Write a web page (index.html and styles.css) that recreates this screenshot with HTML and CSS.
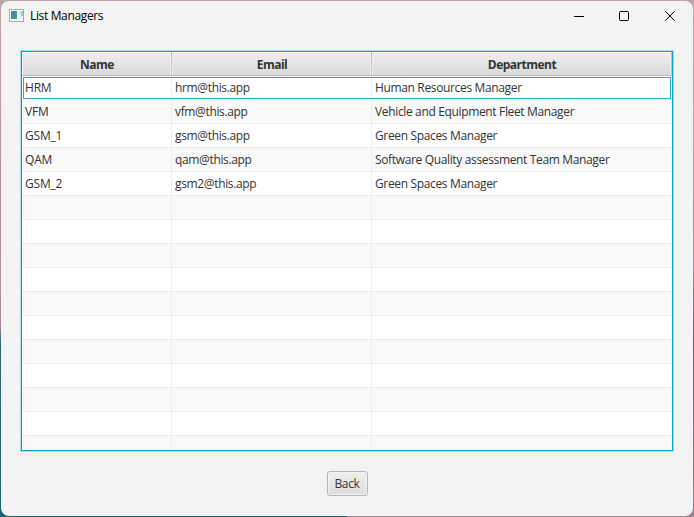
FILE: index.html
```
<!DOCTYPE html>
<html lang="en">
<head>
<meta charset="utf-8">
<title>List Managers</title>
<link rel="stylesheet" href="styles.css">
</head>
<body>
<div class="window">
  <header class="titlebar">
    <svg class="app-icon" width="15" height="13" viewBox="0 0 15 13">
      <defs><linearGradient id="g" x1="0" y1="0" x2="1" y2="1"><stop offset="0" stop-color="#4c7fb0"/><stop offset="1" stop-color="#43a377"/></linearGradient></defs>
      <rect width="15" height="13" fill="#a3a9ad"/>
      <rect x="1" y="1" width="13" height="11" fill="#fafafa"/>
      <rect x="2" y="2" width="6" height="8" fill="url(#g)"/>
      <rect x="9" y="2" width="3" height="4" fill="#e1e6e8"/>
      <rect x="12" y="2" width="2" height="5" fill="#a9c8c4"/>
      <rect x="9" y="7" width="4" height="3" fill="#eceff0"/>
    </svg>
    <h1 class="title">List Managers</h1>
    <div class="controls">
      <svg width="10" height="10" viewBox="0 0 10 10"><path d="M0 5.5H10" stroke="#000"/></svg>
      <svg width="10" height="10" viewBox="0 0 10 10"><rect x=".5" y=".5" width="9" height="9" rx="1" fill="none" stroke="#000"/></svg>
      <svg width="10" height="10" viewBox="0 0 10 10"><path d="M.2.2L9.8 9.8M9.8.2L.2 9.8" stroke="#000"/></svg>
    </div>
  </header>
  <main class="content">
    <div class="table">
      <div class="row head"><div>Name</div><div>Email</div><div>Department</div></div>
      <div class="row focused"><div>HRM</div><div>hrm@this.app</div><div>Human Resources Manager</div></div>
      <div class="row"><div>VFM</div><div>vfm@this.app</div><div>Vehicle and Equipment Fleet Manager</div></div>
      <div class="row"><div>GSM_1</div><div>gsm@this.app</div><div>Green Spaces Manager</div></div>
      <div class="row"><div>QAM</div><div>qam@this.app</div><div>Software Quality assessment Team Manager</div></div>
      <div class="row"><div>GSM_2</div><div>gsm2@this.app</div><div>Green Spaces Manager</div></div>
      <div class="row"><div></div><div></div><div></div></div>
      <div class="row"><div></div><div></div><div></div></div>
      <div class="row"><div></div><div></div><div></div></div>
      <div class="row"><div></div><div></div><div></div></div>
      <div class="row"><div></div><div></div><div></div></div>
      <div class="row"><div></div><div></div><div></div></div>
      <div class="row"><div></div><div></div><div></div></div>
      <div class="row"><div></div><div></div><div></div></div>
      <div class="row"><div></div><div></div><div></div></div>
      <div class="row"><div></div><div></div><div></div></div>
      <div class="row"><div></div><div></div><div></div></div>
    </div>
    <button class="back" type="button">Back</button>
  </main>
</div>
</body>
</html>
```
FILE: styles.css
```
* { box-sizing: border-box; }
body {
  margin: 0;
  padding: 1px;
  height: 517px;
  overflow: hidden;
  font: 12px/16px "Open Sans", "Noto Sans", sans-serif;
  color: #333;
  background:
    linear-gradient(#b9a5ab 0, #a78d99 50%, #6f6079 66%, #9b8490 100%) right / 50% 100% no-repeat,
    linear-gradient(#b9a5ab 0, #a78d99 63%, #35697b 66%, #1f6476 100%) left / 50% 100% no-repeat;
}
.window {
  height: 515px;
  border-radius: 8px;
  overflow: hidden;
  background: #f3f3f3;
}
.titlebar {
  display: flex;
  align-items: center;
  height: 29px;
  padding: 0 18px 0 8px;
}
.app-icon { margin-top: -1px; }
.title {
  margin: 0 0 0 6px;
  font-size: 12px;
  font-weight: 400;
  letter-spacing: -.35px;
  color: #000;
}
.controls { display: flex; gap: 35px; margin-left: auto; }
.controls svg { display: block; }
.controls svg:last-child { margin-left: 1px; }
.content {
  display: flex;
  flex-direction: column;
  align-items: center;
  padding-top: 21px;
}
.table {
  width: 652px;
  height: 400px;
  overflow: hidden;
  border: 1px solid #039ed3;
  box-shadow: 0 0 0 1px #b0dcea;
  background: #fff;
}
.row {
  display: grid;
  grid-template-columns: 150px 200px 300px;
  height: 24px;
  border-bottom: 1px solid #ededed;
  background: #fff;
}
.row:nth-child(odd) { background: #f9f9f9; }
.row > div {
  padding: 4px 3px 0;
  border-right: 1px solid #ededed;
  white-space: nowrap;
  letter-spacing: -.35px;
}
.row > div:first-child { letter-spacing: -.2px; }
.row > div:last-child { border-right: 0; }
.row.focused {
  height: 22px;
  margin: 1px;
  grid-template-columns: 148px 200px 298px;
  border: 1px solid #32a9d2;
}
.row.focused > div { padding-top: 2px; }
.row.focused > div:first-child { padding-left: 1px; }
.row.head {
  height: 24px;
  border-bottom: 1px solid #c0c0c0;
  background: linear-gradient(#efefef, #d9d9d9);
  box-shadow: inset 0 1px #fafafa;
}
.row.head > div {
  padding-top: 5px;
  padding-left: 4px;
  border-right: 1px solid #c0c0c0;
  box-shadow: inset -1px 0 #f0f0f0, inset 1px 0 #f0f0f0;
  font-weight: 700;
  letter-spacing: -.5px;
  text-align: center;
}
.back {
  width: 41px;
  height: 25px;
  margin-top: 20px;
  padding: 0;
  border: 1px solid #b5b5b5;
  border-radius: 3px;
  background: linear-gradient(#efefef, #dcdcdc);
  box-shadow: inset 0 0 0 1px #f4f4f4;
  font: inherit;
  letter-spacing: -.35px;
  color: #333;
}
```
